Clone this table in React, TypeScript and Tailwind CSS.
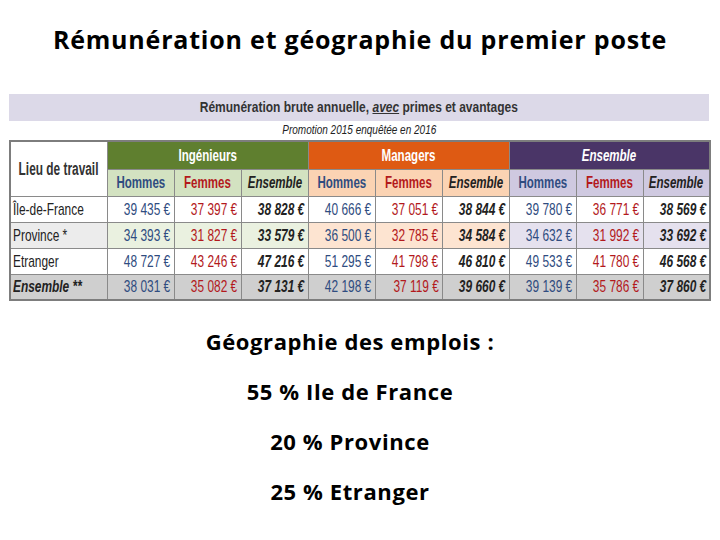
const sans = "font-['Liberation_Sans','Arial',sans-serif]";
const squeeze = "inline-block scale-x-[0.8] whitespace-nowrap";
const narrow = "inline-block scale-x-[0.7] whitespace-nowrap shrink-0";

type Row = { label: string; vals: string[]; kind: "white" | "tint" | "total" };

const rows: Row[] = [
  { label: "Île-de-France", kind: "white", vals: ["39 435 €", "37 397 €", "38 828 €", "40 666 €", "37 051 €", "38 844 €", "39 780 €", "36 771 €", "38 569 €"] },
  { label: "Province *", kind: "tint", vals: ["34 393 €", "31 827 €", "33 579 €", "36 500 €", "32 785 €", "34 584 €", "34 632 €", "31 992 €", "33 692 €"] },
  { label: "Etranger", kind: "white", vals: ["48 727 €", "43 246 €", "47 216 €", "51 295 €", "41 798 €", "46 810 €", "49 533 €", "41 780 €", "46 568 €"] },
  { label: "Ensemble **", kind: "total", vals: ["38 031 €", "35 082 €", "37 131 €", "42 198 €", "37 119 €", "39 660 €", "39 139 €", "35 786 €", "37 860 €"] },
];

const tints = ["bg-[#eaf1e0]", "bg-[#fde4d1]", "bg-[#e5e1ee]"];
const subs = ["bg-[#d3e2c1]", "bg-[#fbd3b3]", "bg-[#cfc9e0]"];
const textCls = ["text-[#2f4c80]", "text-[#b3191c]", "text-[#222] font-bold italic"];

function Center({ children, cls = narrow }: { children: React.ReactNode; cls?: string }) {
  return (
    <div className="flex justify-center">
      <span className={cls}>{children}</span>
    </div>
  );
}

export default function App() {
  return (
    <div className="w-[720px] h-[540px] bg-white overflow-hidden">
      <h1 className="h-[90px] pt-[21px] text-center text-[25px] font-bold text-black font-['Open_Sans',sans-serif] tracking-[0.8px]">
        Rémunération et géographie du premier poste
      </h1>

      <div className={`ml-[9px] w-[700px] ${sans}`}>
        <div className="h-[27px] bg-[#dcd9e8] flex items-center justify-center text-[15px] font-bold text-[#333] mt-[4px]">
          <span className={squeeze}>
            Rémunération brute annuelle, <span className="underline italic">avec</span> primes et avantages
          </span>
        </div>
        <div className="h-[19px] flex items-center justify-center text-[12.5px] italic text-[#222]">
          <span className={squeeze}>Promotion 2015 enquêtée en 2016</span>
        </div>
        <table className="border-collapse border-2 border-[#7d7d7d] table-fixed w-[700px] leading-none">
          <colgroup>
            <col className="w-[97px]" />
            {Array.from({ length: 9 }).map((_, i) => (
              <col key={i} className="w-[67px]" />
            ))}
          </colgroup>
          <thead>
            <tr className="h-[28px]">
              <th rowSpan={2} className="border border-[#8a8a8a] bg-white text-[18px] font-bold text-[#333]">
                <Center cls="inline-block scale-x-[0.66] whitespace-nowrap shrink-0">Lieu de travail</Center>
              </th>
              <th colSpan={3} className="border border-[#8a8a8a] bg-[#5f7f2f] text-white text-[16.5px] font-bold">
                <Center>Ingénieurs</Center>
              </th>
              <th colSpan={3} className="border border-[#8a8a8a] bg-[#de5a13] text-white text-[16.5px] font-bold">
                <Center>Managers</Center>
              </th>
              <th colSpan={3} className="border border-[#8a8a8a] bg-[#4a3567] text-white text-[16.5px] font-bold italic">
                <Center>Ensemble</Center>
              </th>
            </tr>
            <tr className="h-[27px]">
              {[0, 1, 2].map((g) =>
                ["Hommes", "Femmes", "Ensemble"].map((s, j) => (
                  <th key={`${g}-${j}`} className={`border border-[#8a8a8a] ${subs[g]} text-[16.5px] font-bold ${textCls[j]}`}>
                    <Center>{s}</Center>
                  </th>
                ))
              )}
            </tr>
          </thead>
          <tbody>
            {rows.map((r) => (
              <tr key={r.label} className="h-[26px]">
                <td
                  className={`border border-[#8a8a8a] pl-[2px] text-[17px] text-[#222] ${
                    r.kind === "total" ? "bg-[#cfcfcf] font-bold italic" : r.kind === "tint" ? "bg-[#ececec]" : "bg-white"
                  }`}
                >
                  <span className={`${narrow} origin-left`}>{r.label}</span>
                </td>
                {r.vals.map((v, i) => {
                  const g = Math.floor(i / 3);
                  const bg = r.kind === "total" ? "bg-[#cfcfcf]" : r.kind === "tint" ? tints[g] : "bg-white";
                  return (
                    <td key={i} className={`border border-[#8a8a8a] ${bg} pr-[3px] text-[17px] ${textCls[i % 3]}`}>
                      <div className="flex justify-end">
                        <span className={`${narrow} origin-right`}>{v}</span>
                      </div>
                    </td>
                  );
                })}
              </tr>
            ))}
          </tbody>
        </table>
      </div>

      <div className="mt-[15px] pr-[20px] flex flex-col items-center font-['Open_Sans',sans-serif] font-bold text-[22px] text-black leading-[50px] tracking-[0.6px]">
        <p>Géographie des emplois :</p>
        <p>55 % Ile de France</p>
        <p>20 % Province</p>
        <p>25 % Etranger</p>
      </div>
    </div>
  );
}
